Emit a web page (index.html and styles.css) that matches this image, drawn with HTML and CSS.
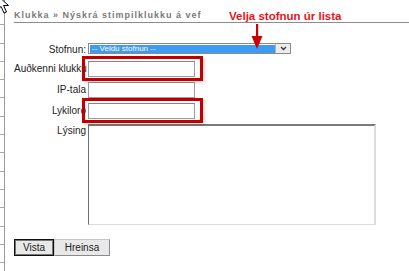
FILE: index.html
```
<!DOCTYPE html>
<html lang="is">

<head>
    <meta charset="UTF-8">
    <meta name="viewport" content="width=device-width, initial-scale=1.0">
    <title>Klukka</title>
    <link rel="stylesheet" href="styles.css">
</head>

<body>
    <svg class="cursor" width="14" height="16" viewBox="0 0 14 16">
        <path d="M-3 -5 L-3 10 L1 6.5 L4 13 L6.5 12 L3.5 5.5 L8.5 5.5 Z" fill="#fff" stroke="#000" stroke-width="1" />
    </svg>
    <div class="page">
        <div class="title">
            <h1>Klukka » Nýskrá stimpilklukku á vef</h1>
            <div class="note">
                <span>Velja stofnun úr lista</span>
                <svg class="arrow" width="12" height="26" viewBox="0 0 12 26">
                    <rect x="5" y="0" width="2.2" height="14" fill="#cc0000" />
                    <polygon points="0.5,12 11.5,12 6,25" fill="#cc0000" />
                </svg>
            </div>
        </div>

        <form class="clock-form">
            <label>Stofnun:</label>
            <div class="select">
                <span class="choice">-- Veldu stofnun --</span>
                <span class="drop">
                    <svg width="7" height="5" viewBox="0 0 7 5">
                        <polyline points="1,1 3.5,3.5 6,1" fill="none" stroke="#333" stroke-width="1.3" />
                    </svg>
                </span>
            </div>

            <label>Auðkenni klukku</label>
            <div class="field marked"><input type="text"></div>

            <label>IP-tala</label>
            <div class="field"><input type="text"></div>

            <label>Lykilorð</label>
            <div class="field marked"><input type="password"></div>

            <label class="top">Lýsing</label>
            <textarea></textarea>
        </form>

        <div class="buttons">
            <button class="default">Vista</button>
            <button>Hreinsa</button>
        </div>
    </div>
</body>

</html>
```

FILE: styles.css
```
* {
    box-sizing: border-box;
    margin: 0;
    padding: 0;
}

body {
    font-family: "Liberation Sans", Arial, sans-serif;
    font-size: 10px;
    color: #222;
    background: #fff repeating-linear-gradient(to bottom, transparent 0, transparent 17.3px, #aaa 17.3px, #aaa 18.3px) 0 7px / 4px 100% repeat-y;
}

.cursor {
    position: absolute;
    top: 0;
    left: 0;
    z-index: 5;
}

.page {
    margin-left: 4px;
    border-left: 1px solid #9a9a9a;
    padding-left: 9px;
    min-height: 271px;
}

.title {
    position: relative;
    padding-top: 10px;
    padding-bottom: 1px;
    border-bottom: 1px solid #8c8c8c;
}

h1 {
    font-size: 9px;
    line-height: 11px;
    font-weight: bold;
    letter-spacing: 1px;
    color: #7a7a7a;
}

.note {
    position: absolute;
    left: 215px;
    top: 9px;
}

.note span {
    display: block;
    font-size: 11.5px;
    font-weight: bold;
    line-height: 14px;
    color: #e8141b;
    white-space: nowrap;
}

.note .arrow {
    position: absolute;
    left: 22px;
    top: 15px;
}

.clock-form {
    display: grid;
    grid-template-columns: 72px auto;
    column-gap: 2px;
    row-gap: 5px;
    align-items: center;
    margin-top: 20px;
}

.clock-form label {
    text-align: right;
    white-space: nowrap;
    line-height: 12px;
}

.clock-form label.top {
    align-self: start;
    padding-top: 1px;
}

.select {
    display: flex;
    width: 203px;
    height: 11px;
    border: 1px solid #8a8a8a;
    background: #fff;
    margin-bottom: 2px;
}

.choice {
    flex: 1;
    margin: 1px 0 0 1px;
    background: #3d9bf3;
    color: #fff;
    font-size: 8px;
    line-height: 8px;
    padding-left: 2px;
}

.drop {
    display: flex;
    align-items: center;
    justify-content: center;
    width: 15px;
    background: #ececec;
    border-left: 1px solid #b5b5b5;
}

.field {
    position: relative;
    width: 107px;
}

.field input {
    display: block;
    width: 107px;
    height: 16px;
    border: 1px solid #9c9c9c;
    border-top-color: #858585;
    background: #fff;
}

.marked::before {
    content: "";
    position: absolute;
    left: -6px;
    right: -8px;
    top: -5px;
    bottom: -4px;
    border: 3px solid #c00000;
    box-shadow: 2px 2px 3px rgba(0, 0, 0, 0.15);
    pointer-events: none;
}

textarea {
    width: 288px;
    height: 101px;
    border: 1px solid;
    border-color: #7a7a7a #dcdcdc #dcdcdc #6e6e6e;
    border-top-width: 2px;
    border-right-width: 2px;
    resize: none;
}

.buttons {
    display: flex;
    margin-top: 14px;
}

button {
    height: 17px;
    font-family: "Liberation Sans", Arial, sans-serif;
    font-size: 10px;
    color: #222;
    background: #e8e8e8;
    border: 1px solid;
    border-color: #c8c8c8 #8a8a8a #8a8a8a #c8c8c8;
}

button.default {
    width: 40px;
    border: 1px solid #111;
    box-shadow: inset 0 0 0 1px #777;
}

button + button {
    width: 56px;
}
```
